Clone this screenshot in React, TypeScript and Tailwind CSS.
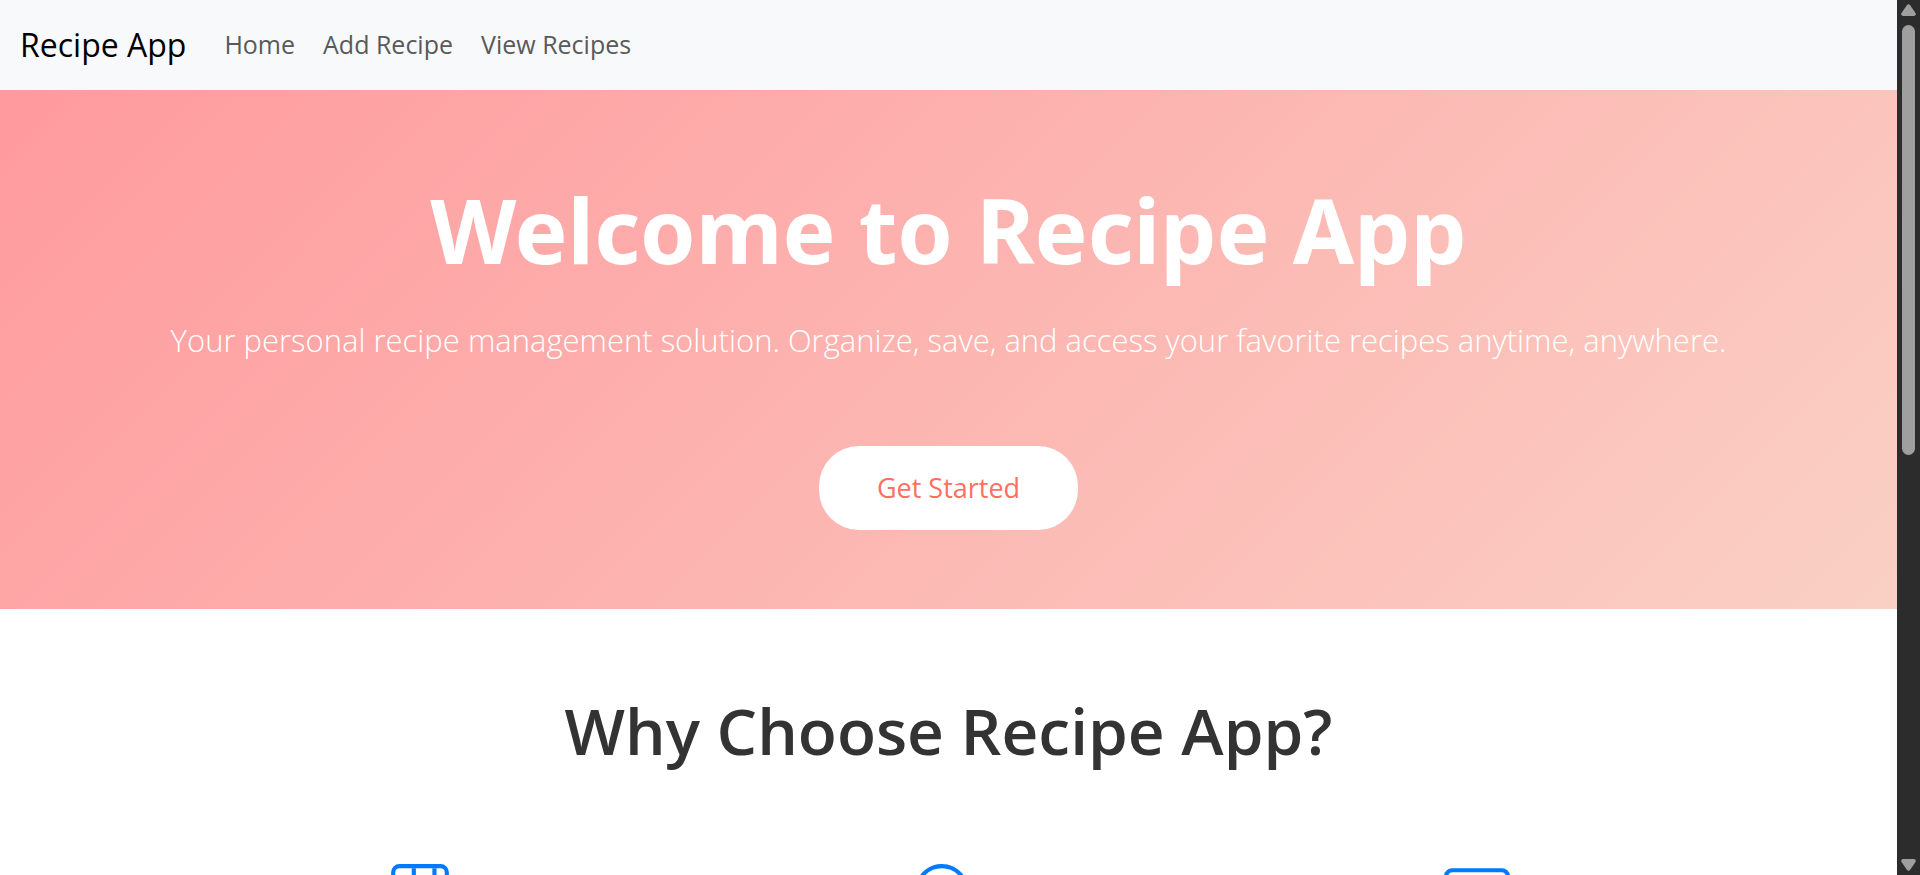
import { BsJournalBookmark, BsSearch, BsWindow } from "react-icons/bs";

const navLinks = ["Home", "Add Recipe", "View Recipes"];
const features = [BsJournalBookmark, BsSearch, BsWindow];

function Navbar() {
  return (
    <nav className="flex h-[90px] shrink-0 items-center bg-[#f8f9fa] px-5">
      <a href="#" className="mr-6 text-[32px] text-black">
        Recipe App
      </a>
      <ul className="flex">
        {navLinks.map((label) => (
          <li key={label}>
            <a href="#" className="px-[14px] text-[25px] text-[#595959]">
              {label}
            </a>
          </li>
        ))}
      </ul>
    </nav>
  );
}

function Hero() {
  return (
    <header className="flex flex-col items-center bg-[linear-gradient(135deg,#ff9a9e_0%,#fad0c4_100%)] px-5 pt-20 pb-[79px] text-center text-white">
      <h1 className="font-['Noto_Sans','Open_Sans',sans-serif] text-[89px] leading-[120px] font-bold">
        Welcome to Recipe App
      </h1>
      <p className="mt-6 text-[31px] leading-[52px] font-light">
        Your personal recipe management solution. Organize, save, and access your favorite recipes anytime, anywhere.
      </p>
      <button
        type="button"
        className="mt-20 h-[84px] rounded-[40px] bg-white px-[58px] text-[27px] text-[#ff6f61]"
      >
        Get Started
      </button>
    </header>
  );
}

function Features() {
  return (
    <section className="px-[156px] pt-20">
      <h2 className="text-center text-[64px] leading-[84px] font-semibold text-[#333333]">
        Why Choose Recipe App?
      </h2>
      <div className="mt-[91px] grid grid-cols-3">
        {features.map((Icon, index) => (
          <div key={index} className="flex justify-center">
            <Icon className="size-[66px] text-[#007bff]" aria-hidden="true" />
          </div>
        ))}
      </div>
    </section>
  );
}

function Scrollbar() {
  return (
    <div className="flex w-[23px] shrink-0 flex-col items-center justify-between bg-[#2c2c2c] py-1" aria-hidden="true">
      <div className="flex h-[52%] w-full flex-col items-center">
        <svg viewBox="0 0 15 12" className="h-3 w-[15px] shrink-0 fill-[#9f9f9f]">
          <path d="M6 1Q7.500-.5 9 1L14.500 9Q15.500 11.500 13 12H2Q-.5 11.500.5 9Z" />
        </svg>
        <div className="mt-[9px] w-[13px] grow rounded-full bg-[#9f9f9f]" />
      </div>
      <svg viewBox="0 0 15 12" className="h-3 w-[15px] shrink-0 fill-[#9f9f9f]">
        <path d="M6 11Q7.500 12.500 9 11L14.500 3Q15.500.5 13 0H2Q-.5.5.5 3Z" />
      </svg>
    </div>
  );
}

export default function App() {
  return (
    <div className="flex h-screen bg-white font-['Open_Sans','Noto_Sans',sans-serif]">
      <main className="min-w-0 grow overflow-y-auto [scrollbar-width:none]">
        <Navbar />
        <Hero />
        <Features />
      </main>
      <Scrollbar />
    </div>
  );
}
